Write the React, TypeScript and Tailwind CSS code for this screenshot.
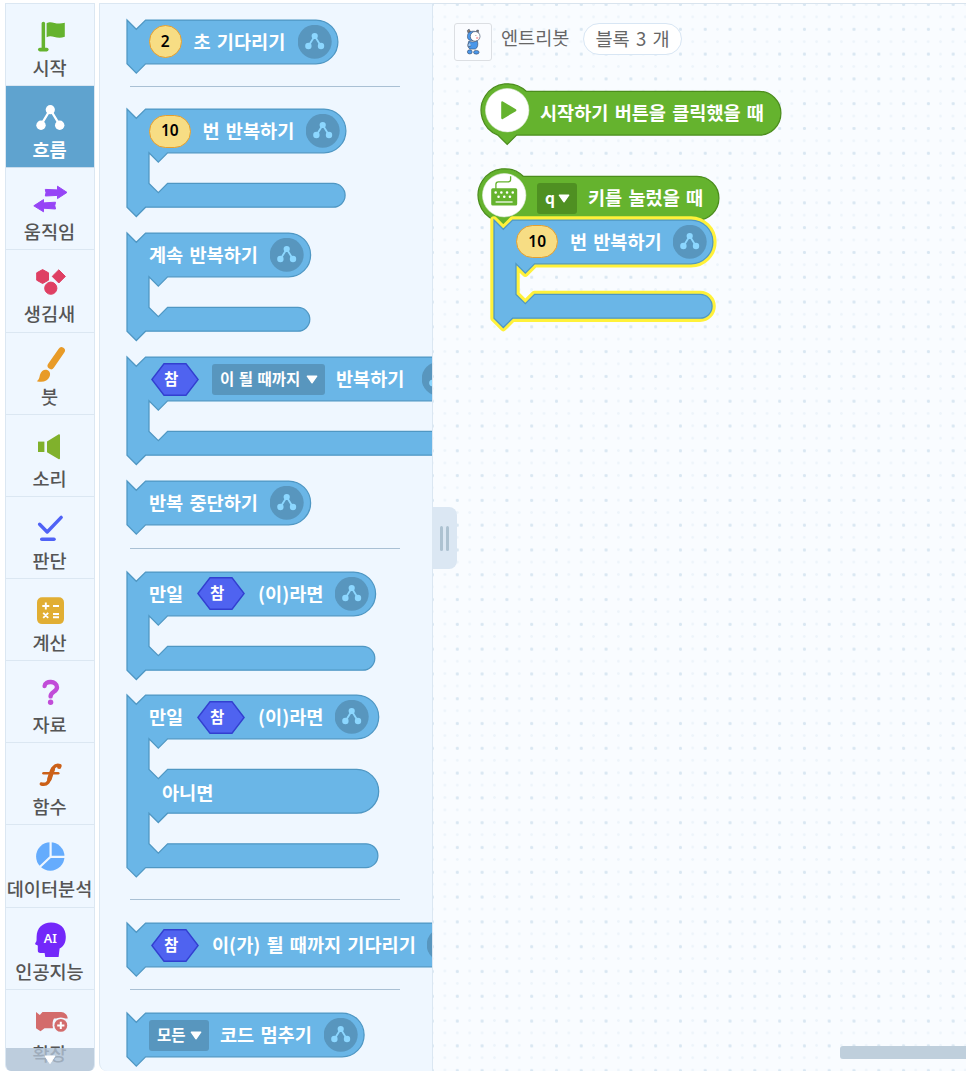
import type { ReactNode } from 'react';

const BLUE = '#6ab6e7';
const BLUE_LINE = '#4f97c3';
const GREEN = '#65b32e';
const GREEN_LINE = '#4b8d1c';

// Outline of a plain command block: notch on top, tail at the bottom.
function simplePath(w: number) {
  return `M0,0 l9.3,9.3 9.3,-9.3 H${w - 22} a21.9,21.9 0 0 1 0,43.8 H18.6 l-9.3,9.3 -9.3,-9.3 z`;
}

// One mouth of a C-shaped block, from the head's lower edge to the next arm.
const MOUTH = 'H40.6 l-9.3,9.3 -9.3,-9.3 v30.6 l9.3,9.3 9.3,-9.3';

function loopPath(w: number) {
  return `M0,0 l9.3,9.3 9.3,-9.3 H${w - 22} a21.9,21.9 0 0 1 0,43.8 ${MOUTH} H${w - 12.8} a11.9,11.9 0 0 1 0,23.8 H18.6 l-9.3,9.3 -9.3,-9.3 z`;
}

function ifElsePath(w: number) {
  return `M0,0 l9.3,9.3 9.3,-9.3 H${w - 22} a21.9,21.9 0 0 1 0,43.8 ${MOUTH} H${w - 22} a21.9,21.9 0 0 1 0,43.8 ${MOUTH} H${w - 12.8} a11.9,11.9 0 0 1 0,23.8 H18.6 l-9.3,9.3 -9.3,-9.3 z`;
}

function Block({
  path,
  className,
  selected,
  children,
}: {
  path: string;
  className: string;
  selected?: boolean;
  children: ReactNode;
}) {
  return (
    <div className={`shrink-0 ${className}`}>
      <svg className="absolute left-0 top-0 h-full w-full overflow-visible">
        {selected && (
          <path d={path} fill="none" stroke="#fff13a" strokeWidth="7.4" strokeLinejoin="round" />
        )}
        <path d={path} fill={BLUE} stroke={BLUE_LINE} strokeWidth="1.25" />
      </svg>
      <div className="relative flex h-11 items-center pl-[22px]">{children}</div>
    </div>
  );
}

function Label({ className = '', children }: { className?: string; children: ReactNode }) {
  return (
    <span
      className={`shrink-0 whitespace-nowrap pb-0.5 text-[18.6px] font-bold leading-6 text-white [word-spacing:2px] ${className}`}
    >
      {children}
    </span>
  );
}

function NumberField({ className, children }: { className: string; children: ReactNode }) {
  return (
    <span
      className={`flex h-[32.5px] shrink-0 items-center justify-center rounded-full border-[1.5px] border-[#e69f2e] bg-[#f7dd84] pb-px font-['Noto_Sans'] text-[15.5px] font-semibold text-black ${className}`}
    >
      {children}
    </span>
  );
}

function TrueField({ className }: { className: string }) {
  return (
    <span className={`relative flex h-[33px] w-12 shrink-0 items-center ${className}`}>
      <svg className="absolute left-0 top-0 h-full w-full" viewBox="0 0 48 33">
        <path d="M0.9,16.5 L13,0.8 H35 L47.1,16.5 L35,32.2 H13 Z" fill="#4f63f0" stroke="#323fd0" strokeWidth="1.4" />
      </svg>
      <span className="relative pb-[3px] pl-[13px] text-[15.5px] font-bold leading-5 text-white">참</span>
    </span>
  );
}

function Dropdown({ className, children }: { className: string; children: ReactNode }) {
  return (
    <span
      className={`flex h-[31px] shrink-0 items-center justify-between rounded-[3px] pl-2 pr-[7px] text-[15.5px] font-bold leading-5 text-white [word-spacing:1px] ${className}`}
    >
      <span className="whitespace-nowrap pb-0.5">{children}</span>
      <svg className="h-[9px] w-3" viewBox="0 0 12 9">
        <path d="M1.3,1.2 H10.7 L6,7.8 Z" fill="white" stroke="white" strokeWidth="1.4" strokeLinejoin="round" />
      </svg>
    </span>
  );
}

function FlowBadge({ className }: { className: string }) {
  return (
    <svg className={`h-[34px] w-[34px] shrink-0 ${className}`} viewBox="0 0 34 34">
      <circle cx="16.7" cy="16.8" r="17" fill="#5896be" />
      <path d="M10.5,21 L16.7,11 L22.9,21" fill="none" stroke="#8cd7ff" strokeWidth="1.8" />
      <circle cx="16.7" cy="11" r="3.1" fill="#8cd7ff" />
      <circle cx="10.4" cy="21" r="3.2" fill="#8cd7ff" />
      <circle cx="23" cy="21" r="3.2" fill="#8cd7ff" />
    </svg>
  );
}

function Separator({ className }: { className: string }) {
  return (
    <div className={`ml-[3px] h-[1.4px] w-[270px] shrink-0 ${className}`}>
      <div className="h-px bg-[#a9c0d4]" />
    </div>
  );
}

const CATEGORIES: { name: string; icon: ReactNode }[] = [
  {
    name: '시작',
    icon: (
      <g fill={GREEN}>
        <rect x="36.6" y="17.8" width="3.5" height="28" rx="1.7" />
        <rect x="33" y="43.8" width="10.6" height="3.6" rx="1.8" />
        <path d="M41.6,19.3 C47,15.8 50,21.5 59.8,18.8 V32.8 C51,36 47,29.8 41.6,33.3 Z" />
      </g>
    ),
  },
  {
    name: '흐름',
    icon: (
      <g fill="white">
        <path d="M36,39 L45.3,23.5 L54.7,39" fill="none" stroke="white" strokeWidth="2.4" />
        <circle cx="45.3" cy="23.7" r="4.6" />
        <circle cx="36" cy="39.2" r="4.7" />
        <circle cx="54.7" cy="39.2" r="4.7" />
      </g>
    ),
  },
  {
    name: '움직임',
    icon: (
      <g fill="#9645f6" stroke="#9645f6" strokeWidth="1" strokeLinejoin="round">
        <path d="M40.3,21.4 L52.5,21.9 V18.2 L62,24.4 L52.5,30.6 V27.4 L40.3,28 L41,24.7 Z" />
        <path d="M50.5,34.2 L38.5,34.9 V31.6 L28.8,37.8 L38.5,43.8 V40.2 L50.5,41 L49.8,37.6 Z" />
      </g>
    ),
  },
  {
    name: '생김새',
    icon: (
      <g fill="#df3f63" stroke="#df3f63" strokeWidth="1" strokeLinejoin="round">
        <path d="M37.6,19.6 L43.5,22.8 V30.2 L37.6,33.5 L31.7,30.2 V22.8 Z" />
        <path d="M53.8,19.8 L60.4,26.4 L53.8,33 L47.2,26.4 Z" />
        <circle cx="45.8" cy="38.2" r="6.1" />
      </g>
    ),
  },
  {
    name: '붓',
    icon: (
      <g fill="#e89b28">
        <path d="M56.5,17.6 L46,32.8" stroke="#e89b28" strokeWidth="6.8" strokeLinecap="round" />
        <path d="M31.8,48.2 C34.5,46.5 34.2,44.5 35,41.8 C36,38 39.3,36 42.2,37 C45.2,38.2 45.8,41.2 44.4,44 C42.6,48 38,49.8 31.8,48.2 Z" />
      </g>
    ),
  },
  {
    name: '소리',
    icon: (
      <g fill="#80b12c">
        <rect x="33" y="26.6" width="6.4" height="10.4" />
        <path d="M42,26.4 L53.8,19.2 Q55,19 55,20.3 V43.2 Q55,44.6 53.8,44.2 L42,37.2 Z" />
      </g>
    ),
  },
  {
    name: '판단',
    icon: (
      <g fill="none" stroke="#4f62f6" strokeLinecap="round">
        <path d="M34.6,27.3 L42.2,35 L56.2,20.4" strokeWidth="3.4" strokeLinejoin="round" />
        <path d="M36.8,42.2 H49" strokeWidth="3.6" />
      </g>
    ),
  },
  {
    name: '계산',
    icon: (
      <g>
        <rect x="32" y="18.3" width="27" height="26.8" rx="5" fill="#e1ae33" />
        <path
          d="M37.3,27 h7 M40.8,23.5 v7 M48,27 h6 M38.2,33.8 l5,5 M43.2,33.8 l-5,5 M48,35 h6 M48,38.3 h6"
          stroke="white"
          strokeWidth="1.9"
          fill="none"
        />
      </g>
    ),
  },
  {
    name: '자료',
    icon: (
      <g>
        <path
          d="M39.6,25 C39.8,19.3 52,19.6 52,26.2 C52,30.8 45.6,30.8 45.6,35.4"
          fill="none"
          stroke="#c14cd8"
          strokeWidth="4.4"
          strokeLinecap="round"
        />
        <circle cx="45.6" cy="41.2" r="2.7" fill="#c14cd8" />
      </g>
    ),
  },
  {
    name: '함수',
    icon: (
      <g fill="none" stroke="#cb6018" strokeLinecap="round">
        <path d="M36.3,41 C42.5,42.6 44,38.5 45.8,32 C47.6,25.5 49,21 55,22.6" strokeWidth="3.4" />
        <path d="M44.4,36 C45.8,32 46.2,29.5 47.8,26.5" strokeWidth="4.6" />
        <circle cx="54.2" cy="23.8" r="1.3" strokeWidth="1.8" />
        <path d="M38.5,30.2 H53.2" strokeWidth="2.6" />
      </g>
    ),
  },
  {
    name: '데이터분석',
    icon: (
      <g>
        <circle cx="45.3" cy="31.5" r="14.2" fill="#65acfd" />
        <path d="M45.6,16.5 V31.8 H60.5 M45.6,31.8 L34,42.8" fill="none" stroke="#eff7ff" strokeWidth="2.2" />
      </g>
    ),
  },
  {
    name: '인공지능',
    icon: (
      <g>
        <path
          d="M46,14.6 C55,14.6 60.8,20 60.8,28.8 C60.8,35 58.5,38.5 54.6,40.6 L53.6,49 H40.3 L39.6,45 H35.4 C33.4,45 32.8,44 32.8,42.2 V37.5 L30.5,36.4 C29.8,35.8 30.2,35 31.4,33.2 C31.6,32.4 31.6,31.6 31.6,28.8 C31.8,20 37.5,14.6 46,14.6 Z"
          fill="#7328fa"
        />
        <text x="45.3" y="35" textAnchor="middle" fill="white" fontSize="12.5" fontWeight="600" fontFamily="Noto Sans">
          AI
        </text>
      </g>
    ),
  },
  {
    name: '확장',
    icon: (
      <g>
        <path
          d="M31,21.9 L34.8,25 L37.5,21.9 H56 C60,22.2 62.6,25 62.7,28.5 H49 C47.5,31 47.3,34 48,38.2 H39.5 L35.5,41.3 L31,38.2 Z"
          fill="#d36c6c"
        />
        <circle cx="55.8" cy="35.4" r="8" fill="#eff7ff" />
        <circle cx="55.8" cy="35.4" r="6.4" fill="#d36c6c" />
        <path d="M52.2,35.4 h7.2 M55.8,31.8 v7.2" stroke="white" strokeWidth="2" />
      </g>
    ),
  },
];

function CategoryMenu() {
  return (
    <nav className="relative ml-[5px] mr-1 flex w-[90px] shrink-0 flex-col overflow-hidden rounded-b-md border-x border-t border-[#dbe7f2] bg-[#eff7ff]">
      {CATEGORIES.map((category, i) => {
        const active = i === 1;
        return (
          <div
            key={category.name}
            className={`-mx-px flex h-[82.15px] shrink-0 flex-col items-center border-b ${
              active ? 'border-[#c9dcec] bg-[#5fa3cf] text-white' : 'border-[#dbe7f2] text-[#555]'
            }`}
          >
            <svg className="h-[54px] w-[90px] shrink-0" viewBox="0 0 90 54">
              {category.icon}
            </svg>
            <span
              className={`-mt-0.5 whitespace-nowrap pr-px text-[18.6px] leading-[22px] ${
                active ? 'font-bold' : 'font-medium'
              }`}
            >
              {category.name}
            </span>
          </div>
        );
      })}
      <div className="absolute -left-px -right-px bottom-0 flex h-[23px] justify-center bg-[#b0c2d4]/80 pt-[7px]">
        <svg className="h-[10px] w-3" viewBox="0 0 12 10">
          <path d="M1,1 H11 L6,8.6 Z" fill="white" stroke="white" strokeLinejoin="round" />
        </svg>
      </div>
    </nav>
  );
}

function Palette() {
  return (
    <section className="flex w-[334px] shrink-0 flex-col overflow-hidden rounded-bl-lg border-x border-t border-[#dbe7f2] bg-[#eff7ff] pl-[27px] pt-[15.7px]">
      <Block path={simplePath(211)} className="relative h-11 w-[211px]">
        <NumberField className="w-[32.5px]">2</NumberField>
        <Label className="ml-3 w-[92px]">초 기다리기</Label>
        <FlowBadge className="ml-3" />
      </Block>
      <Separator className="mt-[22.3px]" />
      <Block path={loopPath(219)} className="relative mt-[22px] h-[98.6px] w-[219px]">
        <NumberField className="w-[41.5px]">10</NumberField>
        <Label className="ml-3 w-[92px]">번 반복하기</Label>
        <FlowBadge className="ml-[11px]" />
      </Block>
      <Block path={loopPath(183.7)} className="relative mt-[25.4px] h-[98.6px] w-[184px]">
        <Label className="w-[110px]">계속 반복하기</Label>
        <FlowBadge className="ml-[11px]" />
      </Block>
      <Block path={loopPath(340)} className="relative mt-[25.4px] h-[98.6px] w-[340px]">
        <TrueField className="ml-[2px]" />
        <Dropdown className="ml-[13px] w-[113px] bg-[#5896be]">이 될 때까지</Dropdown>
        <Label className="ml-[11px] w-[70px]">반복하기</Label>
        <FlowBadge className="ml-4" />
      </Block>
      <Block path={simplePath(183.7)} className="relative mt-[25.4px] h-11 w-[184px]">
        <Label className="w-[110px]">반복 중단하기</Label>
        <FlowBadge className="ml-[11px]" />
      </Block>
      <Separator className="mt-[22.4px]" />
      <Block path={loopPath(248.7)} className="relative mt-[22.4px] h-[98.6px] w-[249px]">
        <Label className="w-[36px]">만일</Label>
        <TrueField className="ml-[12px]" />
        <Label className="ml-[13px] w-[66px]">(이)라면</Label>
        <FlowBadge className="ml-[11px]" />
      </Block>
      <Block path={ifElsePath(251.8)} className="relative mt-[25.4px] h-[173.2px] w-[252px]">
        <Label className="w-[36px]">만일</Label>
        <TrueField className="ml-[12px]" />
        <Label className="ml-[13px] w-[66px]">(이)라면</Label>
        <FlowBadge className="ml-[11px]" />
        <Label className="absolute left-[35px] top-[85px]">아니면</Label>
      </Block>
      <Separator className="mt-[30.8px]" />
      <Block path={simplePath(345)} className="relative mt-[22.4px] h-11 w-[345px]">
        <TrueField className="ml-[2px]" />
        <Label className="ml-[13px] w-[204px]">이(가) 될 때까지 기다리기</Label>
        <FlowBadge className="ml-[11px]" />
      </Block>
      <Separator className="mt-[22.2px]" />
      <Block path={simplePath(237.2)} className="relative mt-[22.3px] h-11 w-[237.5px]">
        <Dropdown className="w-[60px] bg-[#5896be]">모든</Dropdown>
        <Label className="ml-[11px] w-[93px]">코드 멈추기</Label>
        <FlowBadge className="ml-[11px]" />
      </Block>
    </section>
  );
}

function HatShape({ width, icon }: { width: number; icon: ReactNode }) {
  return (
    <svg className="absolute left-0 top-0 h-full w-full overflow-visible">
      <path
        d={`M46.2,8.3 H${width - 22} a21.9,21.9 0 0 1 0,43.8 H36.6 L27.2,61.4 L17.8,52.1 A26.6,26.6 0 1 1 46.2,8.3 Z`}
        fill={GREEN}
        stroke={GREEN_LINE}
        strokeWidth="1.25"
      />
      <circle cx="27.2" cy="27.2" r="21.7" fill="white" stroke="#e3ecdd" strokeWidth="0.6" />
      {icon}
    </svg>
  );
}

function EntryBot() {
  return (
    <svg className="h-[28px] w-[17px]" viewBox="0 0 18 30">
      <g stroke="#31405c" strokeWidth="0.6" strokeLinejoin="round">
        <path d="M3,5 Q1.5,1.5 4.5,1.5 L5.8,4 Z" fill="#8d7e72" />
        <path d="M12,4 Q12,1.2 14.4,2.4 L14,5.4 Z" fill="#8d7e72" />
        <path d="M2.6,8 C3,4 7,3 10.5,3.6 C14,4.4 15.5,7 14.8,10.5 C14,13.5 7,14.5 4,12.6 C2.6,11.6 2.4,10 2.6,8 Z" fill="#4a97ea" />
        <circle cx="10.8" cy="9" r="5.2" fill="#fff" />
        <path d="M4,14 C7,15.5 10.5,15 13,13.6 C14.4,17 13.5,21.5 11,22.6 H5 C2.6,20.5 2.8,17 4,14 Z" fill="#4a97ea" />
        <path d="M4.6,15.5 Q2,18 3.2,20.4 L6.6,19" fill="#9cc9f5" />
        <ellipse cx="5" cy="25.6" rx="2.6" ry="2.2" fill="#4a97ea" />
        <ellipse cx="12" cy="26" rx="3" ry="2" fill="#4a97ea" />
      </g>
      <circle cx="13" cy="10.6" r="1.3" fill="#f6aeb2" />
      <circle cx="11.6" cy="8.2" r="0.5" fill="#333" />
    </svg>
  );
}

function Workspace() {
  return (
    <main className="relative flex-1 overflow-hidden border-t border-[#d9e4ee] bg-[#f9fcff] bg-[radial-gradient(circle_at_center,#d9e7f2_1.1px,transparent_1.9px),radial-gradient(circle_at_center,#edf4fa_1px,transparent_1.7px)] bg-[size:24.8px_24.8px,12.4px_12.4px] bg-[position:-12.9px_-11.9px,-6.7px_-5.7px]">
      <header className="flex items-start pl-[21px] pt-[19px]">
        <div className="flex h-[38px] w-[38px] items-center justify-center rounded-[3px] border border-[#dcdfe3] bg-[#fafcff]">
          <EntryBot />
        </div>
        <span className="ml-[9px] mt-0.5 w-[72px] whitespace-nowrap text-[18.6px] leading-6 text-[#666]">
          엔트리봇
        </span>
        <span className="ml-[10px] flex h-8 w-[99px] items-center justify-center whitespace-nowrap rounded-full border border-[#d8e6f4] bg-white pb-0.5 text-[18.6px] leading-6 text-[#666] [word-spacing:2px]">
          블록 3 개
        </span>
      </header>

      <div className="absolute left-[47px] top-[79px] h-[62px] w-[301px]">
        <HatShape
          width={301}
          icon={
            <path d="M22.3,19.4 L35.3,27.2 L22.3,35 Z" fill={GREEN} stroke={GREEN} strokeWidth="2.2" strokeLinejoin="round" />
          }
        />
        <div className="relative flex h-[60px] items-center pl-[60px]">
          <Label>시작하기 버튼을 클릭했을 때</Label>
        </div>
      </div>

      <div className="absolute left-[44px] top-[164px] h-[62px] w-[242.5px]">
        <HatShape
          width={242}
          icon={
            <g>
              <path d="M18.9,21 V16.4 Q18.9,13.9 21.4,13.9 H31.2 Q33.6,13.9 33.6,11.5 V8.2" fill="none" stroke={GREEN} strokeWidth="1.3" />
              <rect x="14.2" y="20.2" width="26" height="17.4" rx="1.5" fill={GREEN} />
              <path d="M18.6,24.6 h17.3 M21.5,28.8 h11.6" stroke="white" strokeWidth="2.5" strokeLinecap="round" strokeDasharray="0.1 5.6" />
              <path d="M18.6,34 H35.6" stroke="white" strokeWidth="1.2" />
            </g>
          }
        />
        <div className="relative flex h-[60px] items-center pl-[60px]">
          <Dropdown className="w-10 bg-[#4f9022]">q</Dropdown>
          <Label className="ml-[11px]">키를 눌렀을 때</Label>
        </div>
      </div>

      <Block path={loopPath(219)} selected className="absolute left-[61.4px] top-[215.7px] h-[98.6px] w-[219px]">
        <NumberField className="w-[41.5px]">10</NumberField>
        <Label className="ml-3 w-[92px]">번 반복하기</Label>
        <FlowBadge className="ml-[11px]" />
      </Block>

      <div className="absolute left-0 top-[503px] flex h-[62px] w-6 items-center gap-[3px] rounded-r-lg bg-[#dbe7f3] pl-[7px]">
        <div className="h-[25px] w-[3px] rounded-full bg-[#adc2d1]" />
        <div className="h-[25px] w-[3px] rounded-full bg-[#adc2d1]" />
      </div>
      <div className="absolute left-[407px] right-0 top-[1042px] h-[13px] rounded-l-[3px] bg-[#bfcfdc]" />
    </main>
  );
}

export default function App() {
  return (
    <div className="flex h-[1071px] w-[966px] overflow-hidden bg-white pt-[3px] font-['Noto_Sans_CJK_KR',sans-serif]">
      <CategoryMenu />
      <Palette />
      <Workspace />
    </div>
  );
}
